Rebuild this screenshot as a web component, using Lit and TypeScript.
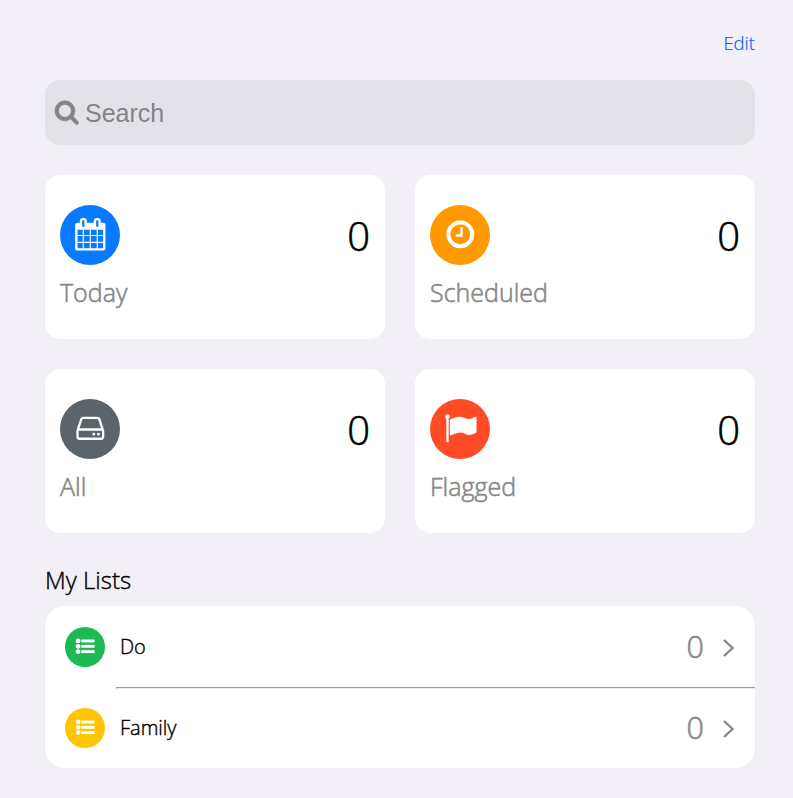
import { LitElement, html, css, svg } from "lit";
import { customElement } from "lit/decorators.js";

const dot = (y: number) => svg`<circle cx="200" cy=${y} r="230"/><rect x="512" y=${y - 140} width="1280" height="280"/>`;

const icons = {
  search: svg`<path d="M1216 832q0-185-131.5-316.5t-316.5-131.5-316.5 131.5-131.5 316.5 131.5 316.5 316.5 131.5 316.5-131.5 131.5-316.5zm512 832q0 52-38 90t-90 38q-54 0-90-38l-343-342q-179 124-399 124-143 0-273.5-55.5t-225-150-150-225-55.5-273.5 55.5-273.5 150-225 225-150 273.5-55.5 273.5 55.5 225 150 150 225 55.5 273.5q0 220-124 399l343 343q37 37 37 90z"/>`,
  calendar: svg`<path d="M192 1664h288v-288h-288v288zm352 0h320v-288h-320v288zm-352-352h288v-320h-288v320zm352 0h320v-320h-320v320zm-352-384h288v-288h-288v288zm736 736h320v-288h-320v288zm-384-736h320v-288h-320v288zm768 736h288v-288h-288v288zm-384-352h320v-320h-320v320zm-352-864v-288q0-13-9.5-22.5t-22.5-9.5h-64q-13 0-22.5 9.5t-9.5 22.5v288q0 13 9.5 22.5t22.5 9.5h64q13 0 22.5-9.5t9.5-22.5zm736 864h288v-320h-288v320zm-384-384h320v-288h-320v288zm384 0h288v-288h-288v288zm32-480v-288q0-13-9.5-22.5t-22.5-9.5h-64q-13 0-22.5 9.5t-9.5 22.5v288q0 13 9.5 22.5t22.5 9.5h64q13 0 22.5-9.5t9.5-22.5zm384-64v1280q0 52-38 90t-90 38h-1408q-52 0-90-38t-38-90v-1280q0-52 38-90t90-38h128v-96q0-66 47-113t113-47h64q66 0 113 47t47 113v96h384v-96q0-66 47-113t113-47h64q66 0 113 47t47 113v96h128q52 0 90 38t38 90z"/>`,
  clock: svg`<path d="M1024 544v448q0 14-9 23t-23 9h-320q-14 0-23-9t-9-23v-64q0-14 9-23t23-9h224v-352q0-14 9-23t23-9h64q14 0 23 9t9 23zm416 352q0-148-73-273t-198-198-273-73-273 73-198 198-73 273 73 273 198 198 273 73 273-73 198-198 73-273zm224 0q0 209-103 385.5t-279.5 279.5-385.5 103-385.5-103-279.5-279.5-103-385.5 103-385.5 279.5-279.5 385.5-103 385.5 103 279.5 279.5 103 385.5z"/>`,
  drive: svg`<path d="M1168 1216q0 33-23.5 56.5t-56.5 23.5-56.5-23.5-23.5-56.5 23.5-56.5 56.5-23.5 56.5 23.5 23.5 56.5zm256 0q0 33-23.5 56.5t-56.5 23.5-56.5-23.5-23.5-56.5 23.5-56.5 56.5-23.5 56.5 23.5 23.5 56.5zm112 160v-320q0-13-9.5-22.5t-22.5-9.5h-1216q-13 0-22.5 9.5t-9.5 22.5v320q0 13 9.5 22.5t22.5 9.5h1216q13 0 22.5-9.5t9.5-22.5zm-1230-480h1180l-157-482q-4-13-16-21.5t-26-8.5h-782q-14 0-26 8.5t-16 21.5zm1358 160v320q0 66-47 113t-113 47h-1216q-66 0-113-47t-47-113v-320q0-25 16-75l197-606q17-53 63-86t101-33h782q55 0 101 33t63 86l197 606q16 50 16 75z"/>`,
  flag: svg`<path d="M320 256q0 72-64 110v1266q0 13-9.5 22.5t-22.5 9.5h-64q-13 0-22.5-9.5t-9.5-22.5v-1266q-64-38-64-110 0-53 37.5-90.5t90.5-37.5 90.5 37.5 37.5 90.5zm1472 64v763q0 25-12.5 38.5t-39.5 27.5q-215 116-369 116-61 0-123.5-22t-108.5-48-115.5-48-142.5-22q-192 0-464 146-17 9-33 9-26 0-45-19t-19-45v-742q0-32 31-55 21-14 79-43 236-120 421-120 107 0 200 29t219 88q38 19 88 19 54 0 117.5-21t110-47 88-47 54.5-21q26 0 45 19t19 45z"/>`,
  list: svg`${dot(384)}${dot(896)}${dot(1408)}`,
};

type IconName = keyof typeof icons;

const icon = (name: IconName) =>
  html`<svg class="icon ${name}" viewBox="0 0 1792 1792" aria-hidden="true">${icons[name]}</svg>`;

const tiles: { label: string; icon: IconName; tone: string; count: number }[] = [
  { label: "Today", icon: "calendar", tone: "blue", count: 0 },
  { label: "Scheduled", icon: "clock", tone: "orange", count: 0 },
  { label: "All", icon: "drive", tone: "slate", count: 0 },
  { label: "Flagged", icon: "flag", tone: "red", count: 0 },
];

const lists = [
  { label: "Do", tone: "green", count: 0 },
  { label: "Family", tone: "yellow", count: 0 },
];

@customElement("app-root")
export class AppRoot extends LitElement {
  static styles = css`
    :host {
      display: block;
      box-sizing: border-box;
      min-height: 798px;
      padding: 30px 38px 30px 45px;
      background: #f2eff6;
      color: #000;
      font-family: "Open Sans", sans-serif;
      font-weight: 300;
      -webkit-text-stroke: 0.4px currentColor;
    }
    .icon { display: block; fill: currentColor; overflow: visible; }
    .searchbox .search { stroke: currentColor; stroke-width: 40; }
    .bar { display: flex; justify-content: flex-end; height: 50px; }
    .edit { color: #0a60ff; font-size: 18.5px; line-height: 25px; -webkit-text-stroke-width: 0.2px; }
    .searchbox {
      display: flex;
      align-items: center;
      box-sizing: border-box;
      height: 65px;
      padding: 0 9px;
      gap: 5.5px;
      border-radius: 15px;
      background: #e3e2e8;
      color: #838388;
      font: 25px/29px "Liberation Sans", sans-serif;
      -webkit-text-stroke: 0;
    }
    .searchbox .icon { width: 25.5px; height: 25.5px; margin-top: -1px; }
    .searchbox span { padding-top: 2px; }
    .tiles {
      display: grid;
      grid-template-columns: 1fr 1fr;
      gap: 30px;
      margin-top: 30px;
    }
    .tile {
      box-sizing: border-box;
      height: 164px;
      padding: 30px 15px;
      border-radius: 15px;
      background: #fff;
    }
    .top { display: flex; justify-content: space-between; height: 60px; }
    .badge {
      display: flex;
      justify-content: center;
      box-sizing: border-box;
      width: 60px;
      height: 60px;
      padding-top: 12.6px;
      border-radius: 50%;
      color: #fff;
    }
    .badge .icon { width: 32.6px; height: 32.6px; }
    .blue { background: #087aff; }
    .orange { background: #ff9900; }
    .slate { background: #5a646a; }
    .red { background: #ff4b26; }
    .green { background: #1db954; }
    .yellow { background: #ffc600; }
    .count { font-size: 40px; line-height: 62px; -webkit-text-stroke-width: 0.6px; }
    .label {
      margin-top: 9px;
      color: #888;
      font-size: 25px;
      line-height: 36px;
      -webkit-text-stroke-width: 0.6px;
    }
    .heading {
      margin: 29px 0 0;
      font-size: 24px;
      font-weight: 300;
      line-height: 36px;
    }
    .lists {
      margin-top: 8px;
      border-radius: 20px;
      background: #fff;
      overflow: hidden;
    }
    .row {
      display: flex;
      align-items: center;
      height: 81px;
      box-sizing: border-box;
      padding: 1px 20px 0;
    }
    .rule {
      height: 0;
      margin: 0 -1px -2px 71px;
      border: 1px solid;
      border-color: #9a9a9a #eee #eee #9a9a9a;
    }
    .bullet {
      display: flex;
      align-items: center;
      justify-content: center;
      width: 40px;
      height: 40px;
      border-radius: 50%;
      color: #fff;
    }
    .bullet .icon { width: 18.6px; height: 18.6px; margin-top: -1px; }
    .name { flex: 1; margin-left: 15px; font-size: 20px; line-height: 30px; }
    .total {
      margin-top: -2px;
      color: #888;
      font-size: 30.5px;
      line-height: 40px;
      -webkit-text-stroke-width: 0.6px;
    }
    .chevron {
      width: 11px;
      height: 18px;
      margin: 2px 1px 0 19px;
      fill: none;
      stroke: #888;
      stroke-width: 2.4;
    }
  `;

  render() {
    return html`
      <div class="bar"><span class="edit">Edit</span></div>
      <div class="searchbox">${icon("search")}<span>Search</span></div>
      <div class="tiles">
        ${tiles.map((t) => html`
          <div class="tile">
            <div class="top">
              <div class="badge ${t.tone}">${icon(t.icon)}</div>
              <div class="count">${t.count}</div>
            </div>
            <div class="label">${t.label}</div>
          </div>`)}
      </div>
      <h2 class="heading">My Lists</h2>
      <div class="lists">
        ${lists.map((l, i) => html`
          ${i > 0 ? html`<div class="rule"></div>` : ""}
          <div class="row">
            <div class="bullet ${l.tone}">${icon("list")}</div>
            <div class="name">${l.label}</div>
            <div class="total">${l.count}</div>
            <svg class="chevron" viewBox="0 0 11 18"><path d="M1 1l8.5 8-8.5 8"/></svg>
          </div>`)}
      </div>
    `;
  }
}
